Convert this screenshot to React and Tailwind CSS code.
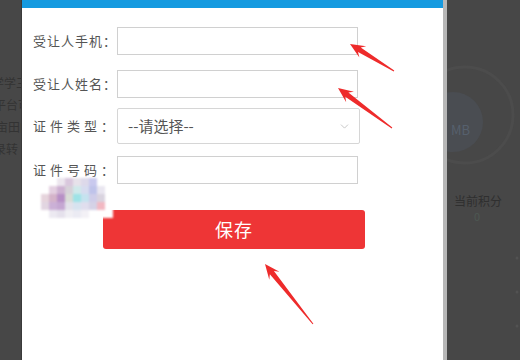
import { ChevronDown } from "lucide-react";

const cjk = "font-['Noto_Sans_CJK_SC','Noto_Sans',sans-serif]";

// arrow polygon from tail to tip
function arrowPoints(tx, ty, px, py) {
  const dx = px - tx;
  const dy = py - ty;
  const len = Math.hypot(dx, dy);
  const ux = dx / len;
  const uy = dy / len;
  const nx = -uy;
  const ny = ux;
  const head = 15;
  const bx = px - ux * head;
  const by = py - uy * head;
  const nbx = px - ux * (head - 4);
  const nby = py - uy * (head - 4);
  const pts = [
    [tx + nx * 0.5, ty + ny * 0.5],
    [nbx + nx * 2.6, nby + ny * 2.6],
    [bx + nx * 6.5, by + ny * 6.5],
    [px, py],
    [bx - nx * 6.5, by - ny * 6.5],
    [nbx - nx * 2.6, nby - ny * 2.6],
    [tx - nx * 0.5, ty - ny * 0.5],
  ];
  return pts.map((p) => p.join(",")).join(" ");
}

const mosaic = [
  ["#fff", "#fff", "#ece6ee", "#d9c7dd", "#e7e2ea", "#ddd9ea", "#c9c9ee", "#fff", "#fff"],
  ["#fff", "#e3cfe0", "#cdb1d2", "#d6d1d8", "#cfe9ea", "#d7dcef", "#bfc3ea", "#e9e6f0", "#fff"],
  ["#e6d4dc", "#d4b3c9", "#b78fc6", "#d9dcd6", "#9ee3e6", "#c5e3ef", "#cfcde9", "#d9d3df", "#fff"],
  ["#e2d5e1", "#cbb0d6", "#c5a7d2", "#e3e2ea", "#d7e3ef", "#e0deee", "#d5d2e6", "#f2b8c2", "#fff"],
  ["#fff", "#ece9f1", "#e5e1ec", "#f0eff4", "#ebebf3", "#f3f1f6", "#fff", "#fff", "#fff"],
];

function Row({ label, spaced, children, className }) {
  return (
    <div className={"flex items-center " + className}>
      <label
        className={
          "w-[84px] shrink-0 whitespace-nowrap text-[13px] text-[#555] " +
          (spaced ? "tracking-[4px]" : "tracking-[1px]")
        }
      >
        {label}
      </label>
      {children}
    </div>
  );
}

export default function App() {
  return (
    <div className={"relative flex h-[360px] w-[520px] overflow-hidden bg-[#474747] " + cjk}>
      {/* left backdrop */}
      <div className="w-[22px] shrink-0 overflow-hidden border-r border-[#3a3a3a] pt-[72px] text-[12px] leading-[22px] text-[#333]">
        <div className="-ml-[8px] whitespace-nowrap">学学三</div>
        <div className="-ml-[6px] whitespace-nowrap">平台可</div>
        <div className="-ml-[4px] whitespace-nowrap">亩田的</div>
        <div className="-ml-[6px] whitespace-nowrap">录转</div>
      </div>

      {/* modal */}
      <div className="relative w-[425px] shrink-0 border-r-[4px] border-[#b7b7b7] bg-white">
        <div className="h-[8px] bg-[#159ae0]" />
        <div className="pl-[11px]">
          <Row label="受让人手机：" className="mt-[19px]">
            <input className="h-[28px] w-[241px] border border-[#d0d0d0] outline-none" />
          </Row>
          <Row label="受让人姓名：" className="mt-[15px]">
            <input className="h-[28px] w-[241px] border border-[#d0d0d0] outline-none" />
          </Row>
          <Row label="证件类型：" spaced className="mt-[10px]">
            <div className="flex h-[36px] w-[243px] items-center justify-between rounded-[2px] border border-[#d6d6d6] pl-[10px] pr-[8px]">
              <span className="text-[15px] text-[#555]">--请选择--</span>
              <ChevronDown size={13} strokeWidth={1.2} color="#aaa" />
            </div>
          </Row>
          <Row label="证件号码：" spaced className="mt-[12px]">
            <input className="h-[28px] w-[241px] border border-[#d0d0d0] outline-none" />
          </Row>
          <div className="mt-[26px] pl-[70px]">
            <button className="flex h-[39px] w-[262px] items-center justify-center rounded-[3px] bg-[#ee3536] text-[18px] tracking-[1px] text-white">
              保存
            </button>
          </div>
        </div>

        {/* mosaic */}
        <div className="absolute left-[19px] top-[178px] grid grid-cols-9 blur-[0.8px]">
          {mosaic.flat().map((c, i) => (
            <div key={i} className="h-[8px] w-[8px]" style={{ backgroundColor: c }} />
          ))}
        </div>
      </div>

      {/* right backdrop */}
      <div className="relative flex-1 overflow-hidden">
        <svg className="absolute left-0 top-0" width="73" height="360">
          <circle cx="18" cy="115" r="48" fill="none" stroke="#4c4c4c" strokeWidth="3" />
          <circle cx="6" cy="122" r="30" fill="#4a4d52" />
          <circle cx="70" cy="258" r="1.5" fill="#525252" />
          <circle cx="70" cy="292" r="1.5" fill="#525252" />
          <circle cx="70" cy="326" r="1.5" fill="#525252" />
        </svg>
        <div className="absolute left-[4px] top-[120px] text-[13px] text-[#56606d]">MB</div>
        <div className="absolute left-[7px] top-[192px] text-[12px] text-[#2f2f2f]">当前积分</div>
        <div className="absolute left-[27px] top-[208px] text-[11px] text-[#4d5752]">0</div>
      </div>

      {/* arrows */}
      <svg className="pointer-events-none absolute left-0 top-0" width="520" height="360">
        <polygon points={arrowPoints(394, 71, 350, 44)} fill="#ee2b2b" />
        <polygon points={arrowPoints(392, 128, 338, 88)} fill="#ee2b2b" />
        <polygon points={arrowPoints(313, 324, 265, 264)} fill="#ee2b2b" />
      </svg>
    </div>
  );
}
